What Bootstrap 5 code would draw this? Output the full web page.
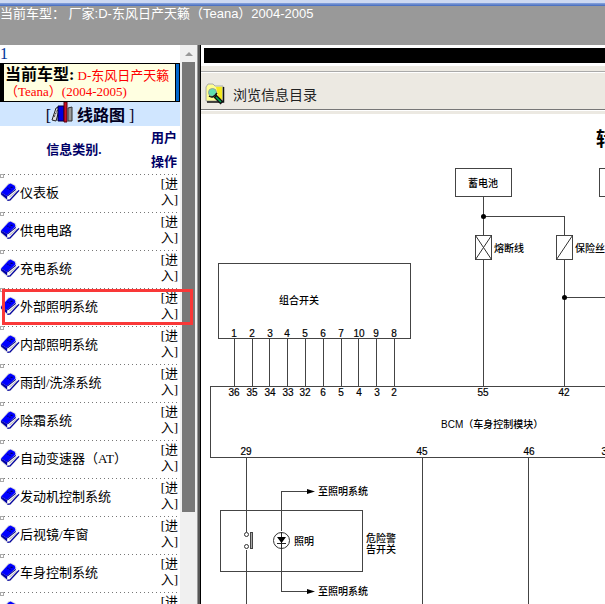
<!DOCTYPE html>
<html lang="zh-CN">
<head>
<meta charset="utf-8">
<meta name="viewport" content="width=device-width, initial-scale=1">
<title>浏览信息目录</title>
<link href="https://cdn.jsdelivr.net/npm/bootstrap@5.3.0/dist/css/bootstrap.min.css" rel="stylesheet">
<style>
body { font-family: "Liberation Serif", "Noto Sans CJK SC", serif; font-size: 13px; line-height: 16px; color: #000; }
.topbar { background: #999; border-top: 3px solid #cdd9f2; height: 45px; color: #fff; font-family: "Liberation Sans", "Noto Sans CJK SC", sans-serif; }
.topbar-stripe { height: 3px; background: linear-gradient(#8ca6de, #4169bd); }
.side { width: 201px; }
.side-count { font-size: 16px; line-height: 18px; color: #039; }
.model-strip { border: 1px solid #000; border-left-width: 4px; background: linear-gradient(90deg, #9cf, #06c); padding-right: 3px; height: 39px; }
.model-note { background: #ffffe1; border-right: 1px solid #000; line-height: 16px; padding: 3px 0 0 1px; color: #f00; }
.model-note strong { font-size: 16px; color: #000; }
.group-link { background: #d0e6ff; height: 24px; font-size: 16px; line-height: 28px; color: #002; }
.cat-table th { color: #006; line-height: 24px; height: 48px; }
.cat-table td { height: 38px; }
.cat-table tbody tr { background: repeating-linear-gradient(90deg, #777 0 1px, #fff 1px 4px) top / 100% 1px no-repeat; }
.cat-table a { color: #000; }
.action-col { width: 32px; }
.action-cell { padding: 0 2px 2px 0; }
.name-cell { padding: 0 0 1px; }
.tick { width: 4px; height: 4px; border: 1px solid #aaa; top: 0; left: 0; }
.scroll-track { width: 17px; background: #f0f0f0; padding: 0 2px; }
.scroll-up { height: 17px; }
.scroll-thumb { height: 450px; background: #787878; }
.frame-edge { width: 4px; background: #000; border-left: 1px solid #999; box-shadow: inset 1px 0 #555, inset 2px 0 #555; }
.highlight { border: 3px solid #f93838; left: 2px; top: 244px; width: 191px; height: 36px; }
.black-band { height: 15px; margin: 3px 0 3px 3px; }
.tool-top { height: 6px; background: #ece9e2; border-bottom: 1px solid #aaa; }
.tool-head { height: 38px; padding-top: 5px; background: #ece9e2; border-top: 1px solid #fff; border-bottom: 1px solid #777; font: 14px "Noto Sans CJK SC", sans-serif; color: #222; }
.tool-foot { height: 4px; background: #ece9e2; border-top: 1px solid #fff; }
.diagram { font-family: "Liberation Sans", "Noto Sans CJK SC", sans-serif; }
</style>
</head>
<body class="vh-100 overflow-hidden d-flex flex-column bg-white">
<svg class="d-none" aria-hidden="true">
  <symbol id="book" viewBox="0 0 19 18">
    <path d="M0 9.500 8 0h3l4 2 1 3 3 2-9 10H7L1 12z" fill="#ccc" opacity=".6"/>
    <path d="M1 9 8 1.500 10 .5l4 2 1 3.500-8 6.500z" fill="#00f"/>
    <path d="M1 9l6 3.500v3.500L1 11z" fill="#0000a8"/>
    <path d="M7 12 15 5l3 1.500-8.500 9.500L7 16z" fill="#fff"/>
    <path d="M7 12.500l8-6.500" stroke="#000090" stroke-width="1"/>
    <path d="M9 13.500l7-6" stroke="#bbb" stroke-width="1"/>
    <path d="M7 16.500 9.500 16 18 7" fill="none" stroke="#0000a0" stroke-width="1.300"/>
    <path d="M7 5h1m1 1h1m0-2h2" stroke="#003"/>
  </symbol>
</svg>

<header class="topbar flex-shrink-0 overflow-hidden text-nowrap">
  <div class="topbar-stripe"></div>
  <div>当前车型： 厂家:D-东风日产天籁（Teana）2004-2005</div>
</header>

<div class="d-flex flex-grow-1 overflow-hidden">
  <aside class="side flex-shrink-0 d-flex position-relative overflow-hidden">
    <nav class="flex-grow-1 overflow-hidden" aria-label="信息类别">
      <div class="side-count">1</div>
      <div class="model-strip">
        <div class="model-note h-100"><strong>当前车型:</strong> D-东风日产天籁（Teana）(2004-2005)</div>
      </div>
      <a href="#" class="group-link d-flex justify-content-center text-decoration-none">
        <span>[</span>
        <svg width="22" height="21" viewBox="0 0 22 21" aria-hidden="true">
          <path d="M1 18 5 6l4-1-4 14z" fill="#ddd" stroke="#222"/>
          <path d="M3 15l4-8" stroke="#333" stroke-dasharray="2 1"/>
          <path d="M7 4h6v15H7z" fill="#00d" stroke="#003"/>
          <path d="M13 0h3v20h-3z" fill="#d01020" stroke="#501"/>
          <path d="M17 6l4-1v14h-4z" fill="#999" stroke="#333"/>
        </svg>
        <strong class="mx-1">线路图</strong><span>]</span>
      </a>
      <table class="cat-table w-100">
        <thead><tr><th class="text-center p-0">信息类别.</th><th class="action-col text-center p-0">用户<br>操作</th></tr></thead>
        <tbody id="categories"></tbody>
      </table>
    </nav>
    <div class="scroll-track flex-shrink-0" aria-hidden="true">
      <div class="scroll-up d-flex justify-content-center align-items-center"><svg width="8" height="4"><path d="M0 4 4 0l4 4z" fill="#999"/></svg></div>
      <div class="scroll-thumb"></div>
    </div>
    <div class="frame-edge flex-shrink-0"></div>
    <div class="highlight position-absolute"></div>
  </aside>

  <main class="flex-grow-1 overflow-hidden">
    <div class="black-band bg-black"></div>
    <div class="tool-top"></div>
    <div class="tool-head d-flex align-items-center">
      <svg class="ms-1 me-2 flex-shrink-0" width="20" height="22" viewBox="0 0 20 22" aria-hidden="true">
        <path d="M1 4 3 1h5l2 2h8v15H1z" fill="#ffff90" stroke="#aaa"/>
        <path d="M11 4h6v12h-3z" fill="#f4ea20"/>
        <path d="M18.500 4v15H2" fill="none" stroke="#111" stroke-width="1.500"/>
        <path d="M10 13l7 7" stroke="#111" stroke-width="4"/>
        <path d="M11 14l5 5" stroke="#0a5" stroke-width="1.500"/>
        <circle cx="7.500" cy="9.500" r="4" fill="#5fe0b0" stroke="#999"/>
        <path d="M4 13q4 3 8-3" fill="none" stroke="#111" stroke-width="1.500"/>
      </svg>
      <span>浏览信息目录</span>
    </div>
    <div class="tool-foot"></div>
    <svg class="diagram d-block" width="600" height="500" viewBox="201 114 600 500" role="img" aria-label="转向信号灯电路图">
      <g fill="none" stroke="#444" stroke-width="1" shape-rendering="crispEdges">
        <path d="M455.500 168.500h56v28h-56zM599.500 168.500h56v28h-56z"/>
        <path d="M483.500 196.500v39M483.500 216.500h81v19M475.500 235.500h16v24h-16zM556.500 235.500h16v24h-16z"/>
        <path d="M483.500 259.500v127M564.500 259.500v127M564.500 297.500h200"/>
        <path d="M218.500 263.500h192v75h-192zM210.500 386.500h560v71h-560z"/>
        <path d="M234.500 338.500v48M252.500 338.500v48M269.500 338.500v48M287.500 338.500v48M305.500 338.500v48M323.500 338.500v48M341.500 338.500v48M358.500 338.500v48M376.500 338.500v48M394.500 338.500v48"/>
        <path d="M246.500 457.500v74M246.500 549.500v64M422.500 457.500v156M528.500 457.500v156"/>
        <path d="M220.500 510.500h142v61h-142zM281.500 531V491.500h27M281.500 549V591.500h27"/>
        <path d="M250.500 532.500h2v16h-2z" fill="#aaa"/>
      </g>
      <path d="M475.500 235.500l16 24m0-24-16 24M556.500 259.500l16-24" fill="none" stroke="#333"/>
      <g fill="#fff" stroke="#333">
        <circle cx="246.500" cy="534.500" r="2"/><circle cx="246.500" cy="546.500" r="2"/>
        <circle cx="281.500" cy="540.500" r="8"/>
      </g>
      <path d="M281.500 532v17M277 543.500h9" stroke="#222"/>
      <path d="M277 537h9l-4.500 6zM307 489l8 2.500-8 2.500zM307 589l8 2.500-8 2.500z"/>
      <circle cx="483.500" cy="216.500" r="2.500"/><circle cx="564.500" cy="297.500" r="2.500"/>
      <text x="596" y="146" font-size="19" font-weight="700">转向信号灯</text>
      <g font-size="10" font-weight="500">
        <g text-anchor="middle">
          <text x="483" y="187">蓄电池</text>
          <text x="299" y="304">组合开关</text>
          <text x="304" y="545">照明</text>
        </g>
        <text x="494" y="252">熔断线</text><text x="575" y="252">保险丝</text>
        <text x="318" y="495">至照明系统</text><text x="318" y="595">至照明系统</text>
        <text x="366" y="542">危险警</text><text x="366" y="553">告开关</text>
        <text x="441" y="428">BCM（车身控制模块）</text>
      </g>
      <g font-size="10" text-anchor="middle" stroke="#000" stroke-width=".2">
        <text x="234" y="337">1</text><text x="252" y="337">2</text><text x="270" y="337">3</text><text x="287" y="337">4</text><text x="305" y="337">5</text><text x="323" y="337">6</text><text x="341" y="337">7</text><text x="359" y="337">10</text><text x="376" y="337">9</text><text x="394" y="337">8</text>
        <text x="234" y="396">36</text><text x="252" y="396">35</text><text x="270" y="396">34</text><text x="288" y="396">33</text><text x="305" y="396">32</text><text x="323" y="396">6</text><text x="341" y="396">5</text><text x="359" y="396">4</text><text x="377" y="396">3</text><text x="394" y="396">2</text>
        <text x="483" y="396">55</text><text x="564" y="396">42</text>
        <text x="246" y="455">29</text><text x="422" y="455">45</text><text x="529" y="455">46</text><text x="607" y="455">32</text>
      </g>
    </svg>
  </main>
</div>
<script src="https://cdn.jsdelivr.net/npm/bootstrap@5.3.0/dist/js/bootstrap.bundle.min.js"></script>
<script>
const names = ["仪表板", "供电电路", "充电系统", "外部照明系统", "内部照明系统", "雨刮/洗涤系统", "除霜系统", "自动变速器（AT）", "发动机控制系统", "后视镜/车窗", "车身控制系统", "音响系统"];
document.getElementById("categories").innerHTML = names.map(n =>
  `<tr><td class="name-cell position-relative"><span class="tick position-absolute"></span><span class="d-flex align-items-center text-nowrap"><svg class="flex-shrink-0" width="20" height="19" aria-hidden="true"><use href="#book"/></svg>${n}</span></td>
   <td class="action-cell text-end"><a href="#" class="text-decoration-none">[进<br>入]</a></td></tr>`).join("");
</script>
</body>
</html>
